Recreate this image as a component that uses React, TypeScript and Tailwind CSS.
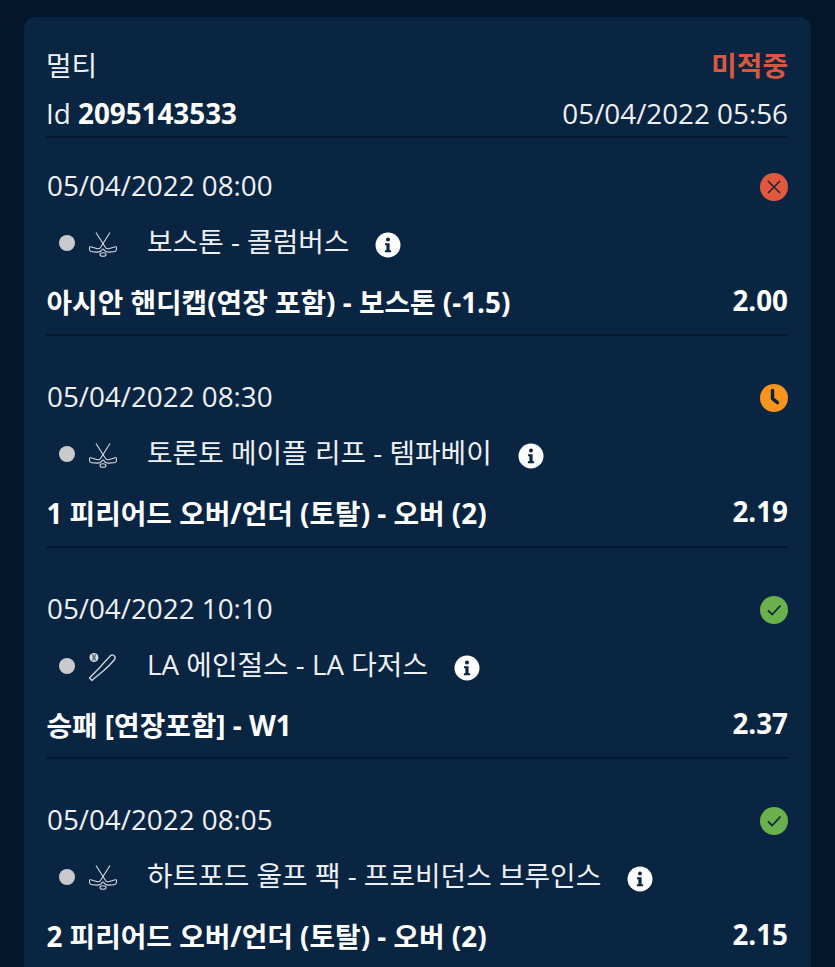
import React from "react";

const FONT = "font-['Open_Sans','Noto_Sans_CJK_KR',sans-serif]";

type Status = "lost" | "pending" | "won";
type Sport = "hockey" | "baseball";

interface Bet {
  date: string;
  status: Status;
  sport: Sport;
  match: string;
  market: string;
  odds: string;
}

const bets: Bet[] = [
  {
    date: "05/04/2022 08:00",
    status: "lost",
    sport: "hockey",
    match: "보스톤 - 콜럼버스",
    market: "아시안 핸디캡(연장 포함) - 보스톤 (-1.5)",
    odds: "2.00",
  },
  {
    date: "05/04/2022 08:30",
    status: "pending",
    sport: "hockey",
    match: "토론토 메이플 리프 - 템파베이",
    market: "1 피리어드 오버/언더 (토탈) - 오버 (2)",
    odds: "2.19",
  },
  {
    date: "05/04/2022 10:10",
    status: "won",
    sport: "baseball",
    match: "LA 에인절스 - LA 다저스",
    market: "승패 [연장포함] - W1",
    odds: "2.37",
  },
  {
    date: "05/04/2022 08:05",
    status: "won",
    sport: "hockey",
    match: "하트포드 울프 팩 - 프로비던스 브루인스",
    market: "2 피리어드 오버/언더 (토탈) - 오버 (2)",
    odds: "2.15",
  },
];

const StatusIcon = ({ status }: { status: Status }) => {
  if (status === "lost") {
    return (
      <svg width="28" height="28" viewBox="0 0 28 28" className="translate-y-[1px]">
        <circle cx="14" cy="14" r="14" fill="#e2583e" />
        <path d="M8 8l12 12M20 8L8 20" stroke="#1c2433" strokeWidth="1.6" fill="none" />
      </svg>
    );
  }
  if (status === "pending") {
    return (
      <svg width="28" height="28" viewBox="0 0 28 28" className="translate-y-[1px]">
        <circle cx="14" cy="14" r="14" fill="#f7941d" />
        <path d="M12.500 6.500v8.200l5 4" stroke="#10203a" strokeWidth="3.400" strokeLinecap="round" strokeLinejoin="round" fill="none" />
      </svg>
    );
  }
  return (
    <svg width="28" height="28" viewBox="0 0 28 28" className="translate-y-[1px]">
      <circle cx="14" cy="14" r="14" fill="#6ab04c" />
      <path d="M8 14.500l4.200 4L20.500 9.500" stroke="#12283a" strokeWidth="1.800" fill="none" />
    </svg>
  );
};

const SportIcon = ({ sport }: { sport: Sport }) => {
  if (sport === "hockey") {
    return (
      <svg width="28" height="25" viewBox="0 0 28 25" fill="none" stroke="#d5dbe2" strokeWidth="1.100">
        <path d="M7 .5L16.500 15.500c.8 1.200 1.800 1.500 3 1.200l6.800-1.900c.8-.2 1.300.2 1.300 1l-.1 1.500c-.1 1.600-1 2.400-2.500 2.500l-5.500.3c-2 .1-3.500-.6-4.500-2.200l-.8-1.200" />
        <path d="M21 .5L11.500 15.500c-.8 1.200-1.800 1.500-3 1.200L1.700 14.800c-.8-.2-1.300.2-1.300 1l.1 1.500c.1 1.600 1 2.400 2.500 2.500l5.500.3c2 .1 3.500-.6 4.500-2.200l.8-1.200" />
        <ellipse cx="14" cy="22.500" rx="3" ry="1.800" />
      </svg>
    );
  }
  return (
    <svg width="30" height="30" viewBox="0 0 30 30" fill="none" stroke="#d5dbe2" strokeWidth="1.300">
      <path d="M1.500 26l2.500 2.500 1.200-1.300 10-8.200c3.200-2.800 8.500-8 11-11 1.300-1.600 1.200-3.200 0-4.300-1.100-1-2.700-1.100-4 .3-2.800 3-8 8.500-10.700 11.800l-8.300 8.400z" />
      <circle cx="6" cy="5.500" r="4.500" fill="#d5dbe2" stroke="none" />
      <path d="M4.600 2.300c.9 2 .9 4.400 0 6.400M7.400 2.300c-.9 2-.9 4.400 0 6.400" stroke="#092541" strokeWidth="0.900" />
    </svg>
  );
};

const InfoIcon = () => (
  <svg width="26" height="26" viewBox="0 0 26 26" className="shrink-0">
    <circle cx="13" cy="13" r="12.500" fill="#ffffff" />
    <circle cx="13" cy="7.500" r="2" fill="#092541" />
    <path d="M10 11.200h4.600v7h1.500v2h-6.200v-2h1.500v-5H10z" fill="#092541" />
  </svg>
);

const BetRow = ({ bet }: { bet: Bet }) => (
  <div className="h-[198.300px] mb-[13px] pt-[27px] border-b-2 border-[#051a30]">
    <div className="flex items-center justify-between h-[42px]">
      <span className="ml-[1px] text-[27.800px] leading-[42px] text-[#eef1f4] -translate-y-[1px]">{bet.date}</span>
      <StatusIcon status={bet.status} />
    </div>
    <div className="flex items-center h-[42px] mt-[14px] pl-[13px]">
      <span className="w-[16px] h-[16px] rounded-full bg-[#c8cacd] shrink-0 translate-y-[1px]" />
      <span className="w-[30px] ml-[13px] flex justify-center shrink-0 translate-y-[2px]">
        <SportIcon sport={bet.sport} />
      </span>
      <span className="ml-[29px] text-[27.800px] leading-[42px] text-[#eef1f4] whitespace-nowrap -translate-y-[1px]">{bet.match}</span>
      <span className="ml-[26px] translate-y-[3px]">
        <InfoIcon />
      </span>
    </div>
    <div className="flex items-center justify-between h-[42px] mt-[18px]">
      <span className="ml-[0.500px] text-[27.800px] leading-[42px] font-bold text-white whitespace-nowrap">{bet.market}</span>
      <span className="text-[27.800px] leading-[42px] font-bold text-white -translate-y-[2px]">{bet.odds}</span>
    </div>
  </div>
);

export default function App() {
  return (
    <div className={`h-[967px] overflow-hidden bg-[#04162b] px-[24px] pt-[17px] ${FONT}`}>
      <div className="w-[787px] h-[1000px] rounded-t-[12px] bg-[#092541] pl-[22px] pr-[23px] pt-[27px]">
        <div className="border-b-2 border-[#051a30] h-[94px]">
          <div className="flex items-center justify-between h-[42px]">
            <span className="text-[27.800px] leading-[42px] text-[#eef1f4]">멀티</span>
            <span className="text-[27.800px] leading-[42px] font-bold text-[#d9573f]">미적중</span>
          </div>
          <div className="flex items-center justify-between h-[42px] mt-[7px] -translate-y-[1px]">
            <span className="text-[27.800px] leading-[42px] text-[#eef1f4]">
              Id <span className="font-bold text-white">2095143533</span>
            </span>
            <span className="text-[27.800px] leading-[42px] text-[#eef1f4]">05/04/2022 05:56</span>
          </div>
        </div>
        {bets.map((bet) => (
          <BetRow key={bet.date} bet={bet} />
        ))}
      </div>
    </div>
  );
}
